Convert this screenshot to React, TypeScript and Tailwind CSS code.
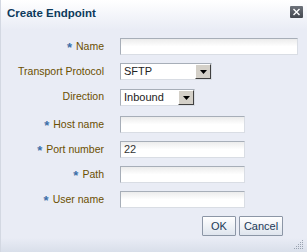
import React from "react";

const font = { fontFamily: '"Liberation Sans", Arial, sans-serif' };

function Label({ text, req }: { text: string; req?: boolean }) {
  return (
    <div className="flex items-center justify-end h-[17px] text-[10.5px] text-[#6b4f00] whitespace-nowrap">
      {req && <span className="text-[#3d6fa8] font-bold mr-[4px] text-[13px] leading-none mt-[2px]">*</span>}
      <span>{text}</span>
    </div>
  );
}

function TextInput({ value, w }: { value?: string; w: string }) {
  return (
    <div
      className={`${w} h-[17px] border border-t-[#a7aeb8] border-l-[#a7aeb8] border-r-[#d9dde4] border-b-[#d9dde4] bg-gradient-to-b from-[#ececec] via-white to-white flex items-center pl-[3px] text-[11px] text-[#333]`}
    >
      {value}
    </div>
  );
}

function Select({ value, w }: { value: string; w: string }) {
  return (
    <div className={`${w} h-[17px] flex border border-t-[#a7aeb8] border-l-[#a7aeb8] border-r-[#d9dde4] border-b-[#d9dde4] bg-white`}>
      <div className="flex-1 flex items-center pl-[3px] text-[11px] text-[#222]">{value}</div>
      <div className="w-[16px] h-full bg-[#d4d0c8] border border-t-white border-l-white border-r-[#404040] border-b-[#404040] flex items-center justify-center">
        <svg width="7" height="4" viewBox="0 0 7 4">
          <path d="M0 0h7L3.5 4z" fill="#000" />
        </svg>
      </div>
    </div>
  );
}

function Button({ children, w }: { children: React.ReactNode; w: string }) {
  return (
    <div
      className={`${w} h-[20px] border border-[#8c96a6] rounded-[1px] bg-gradient-to-b from-white to-[#dfe5ee] flex items-center justify-center text-[11px] text-[#1c3a57]`}
    >
      {children}
    </div>
  );
}

export default function App() {
  return (
    <div style={font} className="w-[307px] h-[252px] flex flex-col border-l border-[#d3d8e2] bg-[#e9ecf5] overflow-hidden relative">
      <div className="h-[30px] shrink-0 bg-gradient-to-b from-white to-[#e9ecf5] flex items-start justify-between pl-[6px] pr-[4px] pt-[6px]">
        <span className="text-[11.5px] font-bold text-[#0d3a5b] leading-[14px]">Create Endpoint</span>
        <div className="w-[13px] h-[12px] rounded-[1px] bg-gradient-to-b from-[#6d727a] to-[#44484f] flex items-center justify-center">
          <svg width="9" height="8" viewBox="0 0 9 8">
            <path d="M1.5 1L7.5 7M7.5 1L1.5 7" stroke="#fff" strokeWidth="1.4" />
          </svg>
        </div>
      </div>
      <div className="grid grid-cols-[103px_1fr] gap-x-[16px] gap-y-[8px] pt-[8px] items-center">
        <Label text="Name" req />
        <TextInput w="w-[178px]" />
        <Label text="Transport Protocol" />
        <Select value="SFTP" w="w-[92px]" />
        <Label text="Direction" />
        <div className="mt-[1px]"><Select value="Inbound" w="w-[75px]" /></div>
        <div className="mt-[2px]"><Label text="Host name" req /></div>
        <div className="mt-[2px]"><TextInput w="w-[125px]" /></div>
        <Label text="Port number" req />
        <TextInput w="w-[125px]" value="22" />
        <Label text="Path" req />
        <TextInput w="w-[125px]" />
        <Label text="User name" req />
        <TextInput w="w-[125px]" />
      </div>
      <div className="flex justify-end gap-[3px] pr-[24px] mt-[8px]">
        <Button w="w-[34px]">OK</Button>
        <Button w="w-[44px]">Cancel</Button>
      </div>
      <div className="flex-1 mt-[2px] bg-gradient-to-b from-[#e9ecf5] to-[#d9dfea]" />
      <svg className="absolute right-[3px] bottom-[2px]" width="10" height="10" viewBox="0 0 10 10">
        {[
          [8, 0], [6, 2], [8, 2], [4, 4], [6, 4], [8, 4], [2, 6], [4, 6], [6, 6], [8, 6], [0, 8], [2, 8], [4, 8], [6, 8], [8, 8],
        ].map(([x, y], i) => (
          <rect key={i} x={x} y={y} width="1" height="1" fill="#9aa3b0" />
        ))}
      </svg>
    </div>
  );
}
